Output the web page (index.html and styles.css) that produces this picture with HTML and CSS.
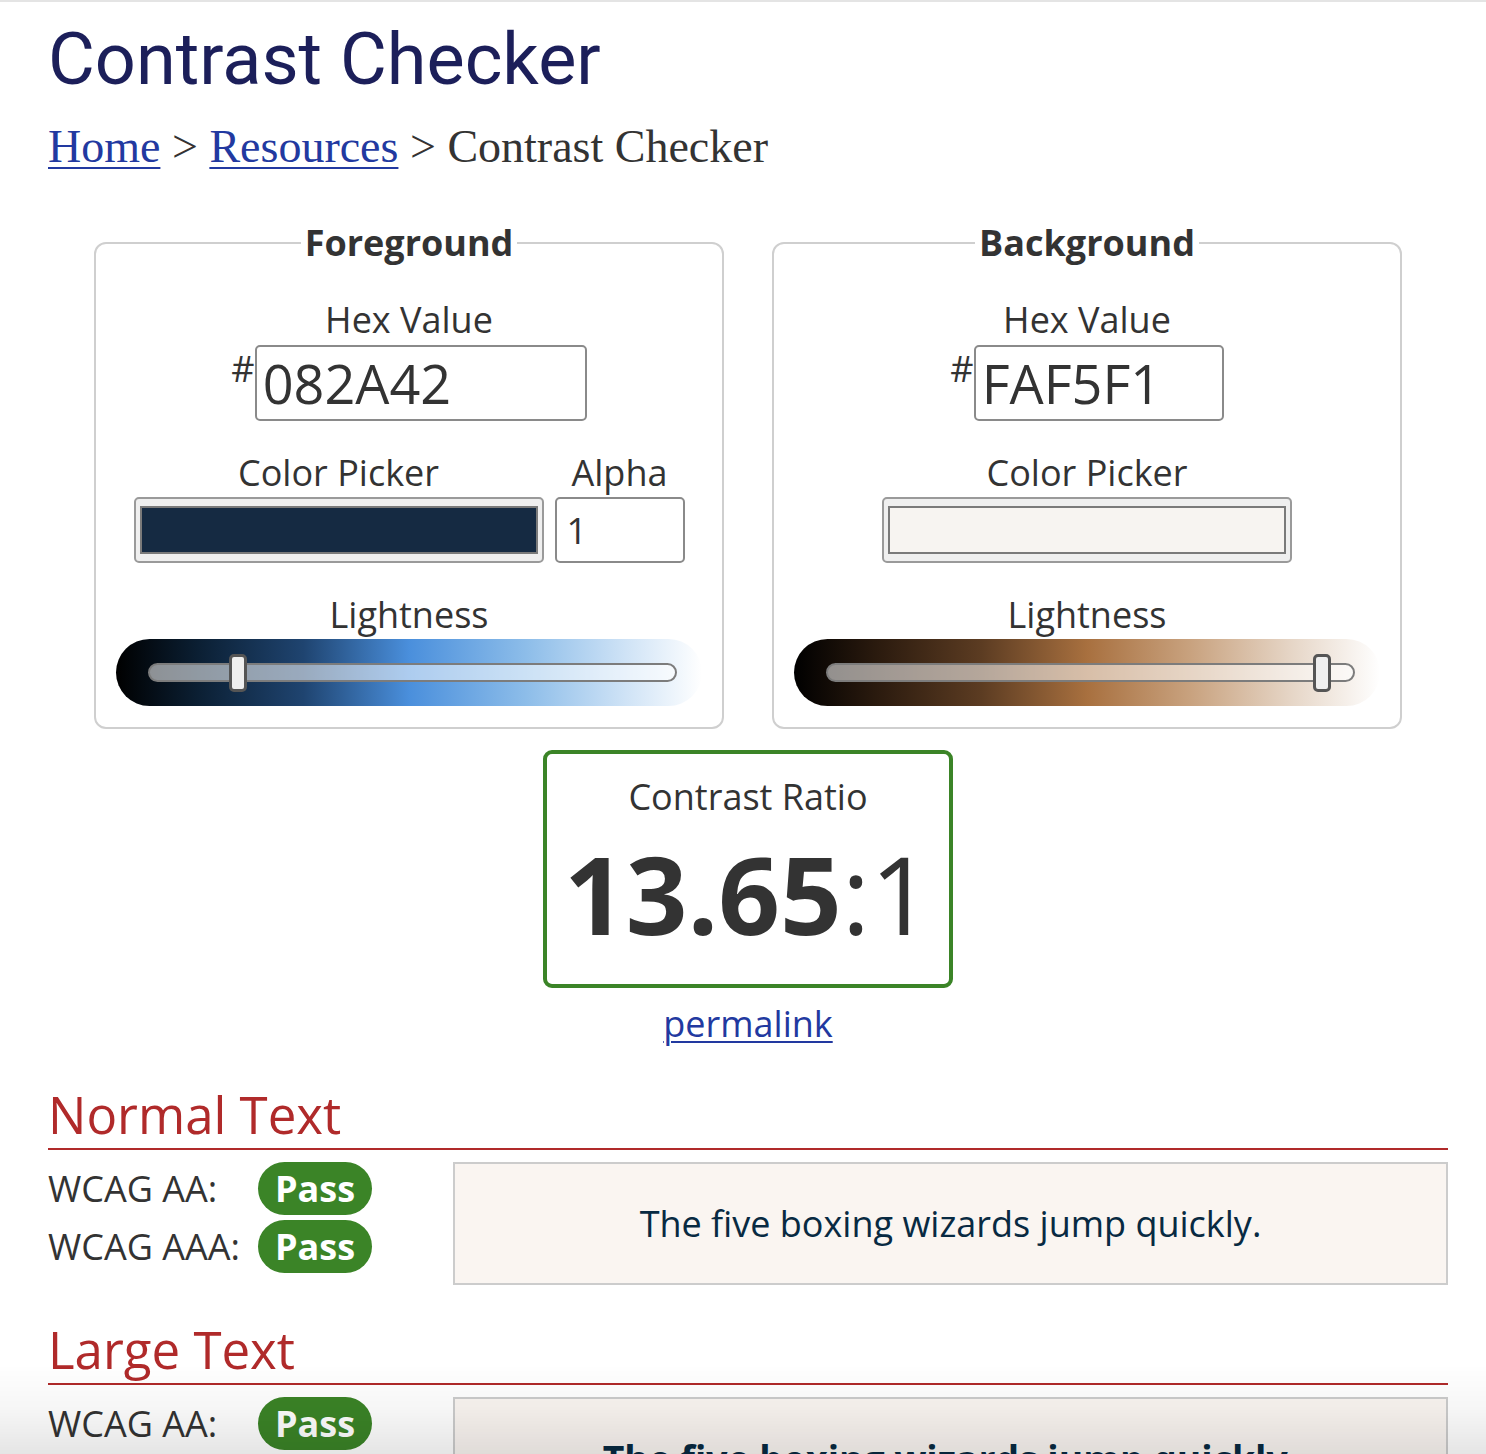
FILE: index.html
```html
<!DOCTYPE html>
<html lang="en">
<head>
<meta charset="utf-8">
<title>Contrast Checker</title>
<link rel="stylesheet" href="styles.css">
</head>
<body>
<div class="topline"></div>
<main class="page">
  <h1 class="title">Contrast Checker</h1>
  <nav class="crumbs"><a href="#">Home</a> &gt; <a href="#">Resources</a> &gt; Contrast Checker</nav>

  <div class="pickers">
    <fieldset class="panel">
      <legend class="panel-title">Foreground</legend>
      <div class="field-label">Hex Value</div>
      <div class="hex-row">
        <span class="hash">#</span>
        <input class="hex-input hex-fg" type="text" value="082A42" aria-label="Foreground hex value">
      </div>
      <div class="picker-row">
        <div class="picker-col">
          <div class="field-label">Color Picker</div>
          <div class="color-well"><div class="swatch swatch-fg"></div></div>
        </div>
        <div class="picker-col">
          <div class="field-label">Alpha</div>
          <input class="alpha-input" type="text" value="1" aria-label="Alpha">
        </div>
      </div>
      <div class="field-label label-light">Lightness</div>
      <div class="slider slider-fg">
        <div class="track"><div class="thumb" style="left: 16.8%"></div></div>
      </div>
    </fieldset>

    <fieldset class="panel">
      <legend class="panel-title">Background</legend>
      <div class="field-label">Hex Value</div>
      <div class="hex-row">
        <span class="hash">#</span>
        <input class="hex-input hex-bg" type="text" value="FAF5F1" aria-label="Background hex value">
      </div>
      <div class="picker-row">
        <div class="picker-col">
          <div class="field-label">Color Picker</div>
          <div class="color-well"><div class="swatch swatch-bg"></div></div>
        </div>
      </div>
      <div class="field-label label-light">Lightness</div>
      <div class="slider slider-bg">
        <div class="track"><div class="thumb" style="left: 94.1%"></div></div>
      </div>
    </fieldset>
  </div>

  <div class="ratio-wrap">
    <div class="ratio-box">
      <div class="ratio-label">Contrast Ratio</div>
      <div class="ratio-value"><b>13.65</b>:1</div>
    </div>
    <a class="permalink" href="#">permalink</a>
  </div>

  <section class="result">
    <h2 class="result-title">Normal Text</h2>
    <div class="result-grid">
      <div class="checks">
        <div class="check"><span class="check-label">WCAG AA:</span><span class="pass">Pass</span></div>
        <div class="check"><span class="check-label">WCAG AAA:</span><span class="pass">Pass</span></div>
      </div>
      <div class="sample">The five boxing wizards jump quickly.</div>
    </div>
  </section>

  <section class="result">
    <h2 class="result-title">Large Text</h2>
    <div class="result-grid">
      <div class="checks">
        <div class="check"><span class="check-label">WCAG AA:</span><span class="pass">Pass</span></div>
        <div class="check"><span class="check-label">WCAG AAA:</span><span class="pass">Pass</span></div>
      </div>
      <div class="sample sample-large">The five boxing wizards jump quickly.</div>
    </div>
  </section>
</main>
<div class="fade"></div>
</body>
</html>
```

FILE: styles.css
```css
html, body {
  margin: 0;
  padding: 0;
  background: #fff;
}

body {
  font-family: "Open Sans", "Noto Sans", sans-serif;
  font-size: 36px;
  line-height: 49px;
  color: #333;
  overflow: hidden;
}

.topline {
  height: 2px;
  background: #e4e4e4;
}

.page {
  padding: 0 38px 0 48px;
}

.title {
  margin: 16px 0 0;
  font-family: Roboto, "Liberation Sans", sans-serif;
  font-weight: 400;
  font-size: 72px;
  line-height: 84px;
  color: #1c1f5a;
}

.crumbs {
  margin-top: 19px;
  font-family: "Liberation Serif", "DejaVu Serif", serif;
  font-size: 46px;
  line-height: 52px;
  color: #333;
}

.crumbs a {
  color: #2239a0;
  text-decoration-thickness: 2px;
  text-underline-offset: 5px;
}

.pickers {
  display: flex;
  justify-content: center;
  gap: 48px;
  margin-top: 45px;
}

.panel {
  box-sizing: border-box;
  width: 630px;
  margin: 0;
  padding: 28px 20px 21px;
  border: 2px solid #cfcfcf;
  border-radius: 12px;
  min-inline-size: 0;
}

.panel-title {
  margin: 0 auto;
  padding: 0 4px;
  font-weight: 700;
  font-size: 36px;
  line-height: 49px;
  color: #333;
}

.field-label {
  text-align: center;
  line-height: 49px;
}

.hex-row {
  display: flex;
  justify-content: center;
  align-items: flex-start;
  margin-top: 1px;
}

.hash {
  font-size: 36px;
  line-height: 36px;
  margin-top: 6px;
}

.hex-input {
  box-sizing: border-box;
  height: 76px;
  margin: 0;
  padding: 0 6px;
  border: 2px solid #8a8a8a;
  border-radius: 5px;
  background: #fff;
  font-family: "Open Sans", "Noto Sans", sans-serif;
  font-size: 54px;
  color: #333;
  outline: none;
}

.hex-fg { width: 332px; }
.hex-bg { width: 250px; }

.picker-row {
  display: flex;
  justify-content: center;
  gap: 11px;
  margin-top: 27px;
}

.picker-col {
  display: flex;
  flex-direction: column;
}

.color-well {
  box-sizing: border-box;
  width: 410px;
  height: 66px;
  padding: 7px 4px;
  border: 2px solid #9a9a9a;
  border-radius: 5px;
  background: #efefef;
}

.swatch {
  box-sizing: border-box;
  height: 100%;
  border: 2px solid #7a7a7a;
}

.swatch-fg { background: #152a42; }
.swatch-bg { background: #f7f4f1; }

.alpha-input {
  box-sizing: border-box;
  width: 130px;
  height: 66px;
  margin: 0;
  padding: 0 10px;
  border: 2px solid #8a8a8a;
  border-radius: 5px;
  background: #fff;
  font-family: "Open Sans", "Noto Sans", sans-serif;
  font-size: 36px;
  color: #333;
  outline: none;
}

.label-light {
  margin-top: 27px;
}

.slider {
  display: flex;
  align-items: center;
  height: 67px;
  margin-top: 0;
  padding: 0 25px 0 32px;
  border-radius: 34px;
}

.slider-fg {
  background: linear-gradient(to right, #000 0%, #0b1f33 14%, #1f4470 32%, #4a8fdc 50%, #8dbde9 70%, #cfe3f6 87%, #fff 100%);
}

.slider-bg {
  background: linear-gradient(to right, #000 0%, #2a1a0e 14%, #5c3c22 32%, #a8703f 50%, #c9a380 68%, #e6d6c7 85%, #fff 100%);
}

.track {
  position: relative;
  flex: 1;
  height: 19px;
  box-sizing: border-box;
  border: 2px solid #7c7c7c;
  border-radius: 10px;
  background: rgba(255, 255, 255, 0.55);
}

.thumb {
  position: absolute;
  top: 50%;
  width: 18px;
  height: 38px;
  box-sizing: border-box;
  transform: translate(-50%, -50%);
  border: 3px solid #555;
  border-radius: 5px;
  background: #efefef;
}

.ratio-wrap {
  display: flex;
  flex-direction: column;
  align-items: center;
  margin-top: 21px;
}

.ratio-box {
  box-sizing: border-box;
  width: 410px;
  height: 238px;
  padding-top: 18px;
  border: 4px solid #3b8427;
  border-radius: 9px;
  text-align: center;
}

.ratio-label {
  line-height: 49px;
}

.ratio-value {
  margin-top: 13px;
  font-size: 108px;
  line-height: 120px;
  font-weight: 400;
  color: #333;
}

.ratio-value b {
  font-weight: 700;
}

.permalink {
  margin-top: 11px;
  color: #2239a0;
  text-decoration-thickness: 2px;
  text-underline-offset: 4px;
}

.result-title {
  margin: 36px 0 0;
  padding-bottom: 4px;
  border-bottom: 2px solid #b02a2a;
  font-weight: 400;
  font-size: 51px;
  line-height: 60px;
  color: #b02a2a;
}

.result + .result .result-title {
  margin-top: 34px;
}

.result-grid {
  display: grid;
  grid-template-columns: 405px 1fr;
  margin-top: 12px;
}

.checks {
  display: flex;
  flex-direction: column;
  gap: 5px;
}

.check {
  display: flex;
  align-items: center;
}

.check-label {
  width: 210px;
}

.pass {
  padding: 2px 17px;
  border-radius: 27px;
  background: #3b8427;
  color: #fff;
  font-weight: 700;
}

.sample {
  display: flex;
  align-items: center;
  justify-content: center;
  height: 123px;
  box-sizing: border-box;
  border: 2px solid #cccccc;
  background: #faf5f1;
  color: #082a42;
}

.sample-large {
  font-weight: 700;
  font-size: 37.33px;
}

.fade {
  position: fixed;
  left: 0;
  right: 0;
  bottom: 0;
  height: 90px;
  pointer-events: none;
  background: linear-gradient(to bottom, rgba(0, 0, 0, 0) 0%, rgba(0, 0, 0, 0.035) 50%, rgba(0, 0, 0, 0.1) 100%);
}
```
